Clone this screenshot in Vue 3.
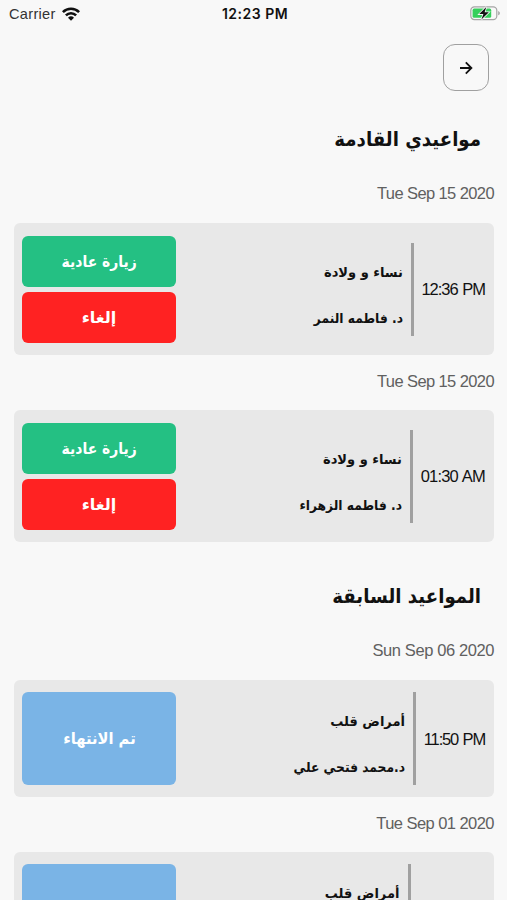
<template>
  <main class="screen" dir="rtl">
    <header class="status" dir="ltr">
      <div class="status__carrier">
        <span>Carrier</span>
        <svg class="status__wifi" viewBox="0 0 18 14">
          <path d="M.9 5.1a11.4 11.4 0 0 1 16.2 0" />
          <path d="M3.9 8.3a7.2 7.2 0 0 1 10.2 0" />
          <path class="status__wifi-dot" d="M9 13.8 6 10.7a4.3 4.3 0 0 1 6 0z" />
        </svg>
      </div>
      <span class="status__time">12:23 PM</span>
      <svg class="status__battery" viewBox="0 0 31 15">
        <rect x=".8" y=".8" width="26" height="12.8" rx="3.6" fill="none" stroke="#a5a5a5" stroke-width="1.2" />
        <rect x="2.6" y="2.6" width="18.6" height="9.2" rx="1.6" fill="#35cf5b" />
        <path d="M28.2 4.9c2.2.8 2.2 3.6 0 4.4z" fill="#a5a5a5" />
        <path d="M16.3.9 9.2 8.1h4.2l-2 5.4 7.4-7.2h-4.2z" fill="#111" stroke="#f7f7f7" stroke-width="1.6" paint-order="stroke" />
      </svg>
    </header>

    <nav class="toolbar">
      <button class="back" aria-label="رجوع">
        <svg viewBox="0 0 14 14">
          <path d="M1 7h11.2M6.8 1.4 12.4 7l-5.6 5.6" />
        </svg>
      </button>
    </nav>

    <section v-for="section in sections" :key="section.title" class="section">
      <h2 class="section__title">{{ section.title }}</h2>
      <article v-for="(item, i) in section.items" :key="i" class="visit">
        <p class="visit__date" dir="ltr" :style="{ letterSpacing: item.dateTracking }">{{ item.date }}</p>
        <div class="card" :class="{ 'card--done': item.done }">
          <div
            class="card__time"
            dir="ltr"
            :style="{ width: item.timeWidth, letterSpacing: item.timeTracking }"
          >
            {{ item.time }}
          </div>
          <div class="card__info">
            <p class="card__clinic">{{ item.clinic }}</p>
            <p class="card__doctor">{{ item.doctor }}</p>
          </div>
          <div class="card__actions">
            <button v-if="item.done" class="btn btn--done"><span>تم الانتهاء</span></button>
            <template v-else>
              <button class="btn btn--visit"><span>زيارة عادية</span></button>
              <button class="btn btn--cancel"><span>إلغاء</span></button>
            </template>
          </div>
        </div>
      </article>
    </section>
  </main>
</template>

<script setup>
const sections = [
  {
    title: "مواعيدي القادمة",
    items: [
      {
        date: "Tue Sep 15 2020",
        dateTracking: "-0.6px",
        time: "12:36 PM",
        timeWidth: "63px",
        timeTracking: "-1px",
        clinic: "نساء و ولادة",
        doctor: "د. فاطمه النمر",
      },
      {
        date: "Tue Sep 15 2020",
        dateTracking: "-0.6px",
        time: "01:30 AM",
        timeWidth: "64px",
        timeTracking: "-0.8px",
        clinic: "نساء و ولادة",
        doctor: "د. فاطمه الزهراء",
      },
    ],
  },
  {
    title: "المواعيد السابقة",
    items: [
      {
        date: "Sun Sep 06 2020",
        dateTracking: "-0.4px",
        time: "11:50 PM",
        timeWidth: "61px",
        timeTracking: "-1.15px",
        clinic: "أمراض قلب",
        doctor: "د.محمد فتحي علي",
        done: true,
      },
      {
        date: "Tue Sep 01 2020",
        dateTracking: "-0.55px",
        time: "02:00 PM",
        timeWidth: "66.5px",
        timeTracking: "-0.6px",
        clinic: "أمراض قلب",
        doctor: "د.محمد فتحي علي",
        done: true,
      },
    ],
  },
];
</script>

<style>
body {
  margin: 0;
  background: #f8f8f8;
}
</style>

<style scoped>
.screen {
  height: 900px;
  overflow: hidden;
  background: #f8f8f8;
  color: #111;
  font-family: "Liberation Sans", "DejaVu Sans", sans-serif;
}

.status {
  display: grid;
  grid-template-columns: 1fr auto 1fr;
  align-items: center;
  height: 27px;
  padding: 0 6px 0 9px;
}

.status__carrier {
  display: flex;
  align-items: center;
  gap: 6px;
  font: 14.6px "Liberation Sans", sans-serif;
  letter-spacing: 0.3px;
  color: #333;
}

.status__wifi {
  width: 18px;
  height: 14px;
  fill: none;
  stroke: #111;
  stroke-width: 2.6;
}

.status__wifi-dot {
  fill: #111;
  stroke: none;
}

.status__time {
  font: 600 14px Inter, sans-serif;
  letter-spacing: 0.5px;
}

.status__battery {
  justify-self: end;
  width: 31px;
  height: 15px;
}

.toolbar {
  display: flex;
  padding: 17px 18px 0;
}

.back {
  display: grid;
  place-items: center;
  width: 46px;
  height: 47px;
  padding: 0;
  border: 1.5px solid #a0a0a0;
  border-radius: 12px;
  background: transparent;
}

.back svg {
  width: 14px;
  height: 14px;
  fill: none;
  stroke: #111;
  stroke-width: 1.8;
}

.section__title {
  height: 30px;
  margin: 33px 26px 0;
  font: 700 20px/30px "DejaVu Sans", sans-serif;
  white-space: nowrap;
  transform: scaleX(0.908);
  transform-origin: right;
}

.section + .section .section__title {
  margin-top: 39px;
}

.visit {
  padding: 0 13px 0 13.5px;
}

.visit__date {
  height: 55px;
  margin: 0;
  font-size: 16.5px;
  line-height: 53px;
  text-align: right;
  color: #606060;
}

.section__title + .visit .visit__date {
  height: 69px;
  line-height: 79px;
}

.card {
  display: flex;
  box-sizing: border-box;
  height: 132px;
  padding: 12px 9px 12px 8.5px;
  border-radius: 6px;
  background: #e8e8e8;
}

.card--done {
  height: 117px;
}

.card__time {
  display: flex;
  align-items: center;
  justify-content: flex-end;
  padding-top: 1px;
  font-size: 16.5px;
  word-spacing: 1px;
  white-space: nowrap;
}

.card__info {
  display: flex;
  flex: 1;
  flex-direction: column;
  justify-content: space-between;
  align-self: center;
  box-sizing: border-box;
  height: 93px;
  margin-right: 8px;
  padding: 18px 8px 7px 0;
  border-right: 3px solid #a0a0a0;
}

.card__info p {
  margin: 0;
  font: 700 13.5px/22px "DejaVu Sans", sans-serif;
  white-space: nowrap;
  transform-origin: right;
}

.card__clinic {
  transform: scaleX(0.965);
}

.card__doctor {
  transform: scaleX(0.91);
}

.card__actions {
  display: flex;
  flex-direction: column;
  align-self: center;
  gap: 5px;
  width: 154px;
}

.btn {
  height: 51px;
  padding: 0;
  border: 0;
  border-radius: 6px;
  color: #fff;
  font: 700 16px "DejaVu Sans", sans-serif;
}

.btn span {
  display: inline-block;
}

.btn--visit {
  background: #24c083;
}

.btn--visit span {
  transform: scaleX(0.87);
}

.btn--cancel {
  background: #ff2222;
}

.btn--done {
  height: 93px;
  background: #7ab4e6;
}

.btn--done span {
  transform: scaleX(0.92);
}
</style>
